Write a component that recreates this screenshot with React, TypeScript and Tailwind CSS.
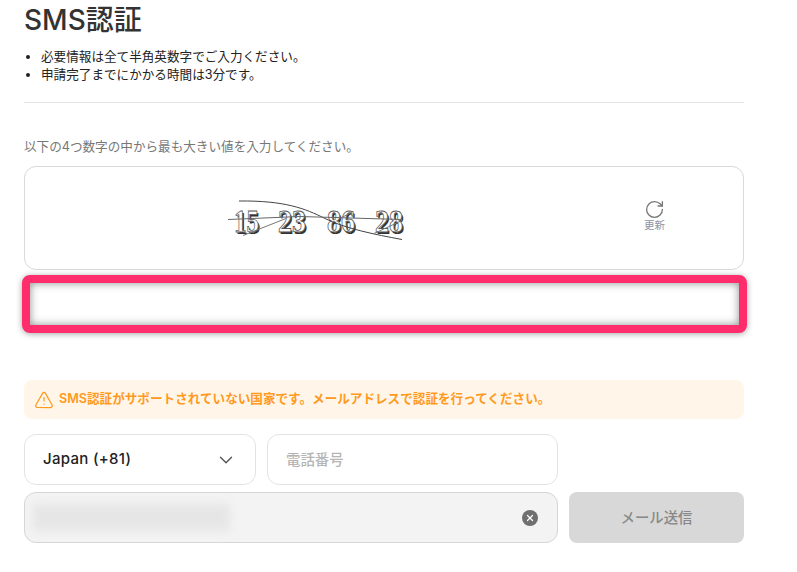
import { ChevronDown, RotateCw, TriangleAlert, X } from "lucide-react";

const FONT = "font-['Inter','Noto_Sans_CJK_JP',sans-serif]";

const CAPTCHA_NUMBERS = [
  { label: "15", x: 234, width: 25 },
  { label: "23", x: 278, width: 28 },
  { label: "86", x: 327, width: 28 },
  { label: "28", x: 375, width: 28 },
];

/** Captcha picture: outlined digits with noise lines through them */
function Captcha() {
  return (
    <svg width="190" height="60" viewBox="220 187.5 190 60" className="block">
      {CAPTCHA_NUMBERS.map((n) => (
        <g key={n.label} fontFamily="'Liberation Serif', serif" fontSize="31" fontWeight="700">
          <text x={n.x + 1.5} y={233} fill="#333" textLength={n.width} lengthAdjust="spacingAndGlyphs">
            {n.label}
          </text>
          <text x={n.x} y={231.5} fill="#fff" stroke="#555" strokeWidth="0.8" textLength={n.width} lengthAdjust="spacingAndGlyphs">
            {n.label}
          </text>
        </g>
      ))}
      <path d="M239 200.5C285 200 305 208 325 218S375 234 402 239" fill="none" stroke="#444" strokeWidth="1" />
      <path d="M228 219L300 216L402 219" fill="none" stroke="#666" strokeWidth="1" />
      <path d="M243 235L286 218" fill="none" stroke="#777" strokeWidth="1" />
      <path d="M374 233L402 220M340 218L353 211" fill="none" stroke="#777" strokeWidth="1" />
    </svg>
  );
}

export default function App() {
  return (
    <div className={`${FONT} h-[572px] w-[797px] overflow-hidden bg-white`}>
      <div className="ml-6 w-[720px]">
        <h1 className="text-[28px] leading-10 font-medium text-[#333]">SMS認証</h1>
        <ul className="mt-2 list-disc pl-[17px] text-[12.6px] leading-[18px] text-[#222]">
          <li>必要情報は全て半角英数字でご入力ください。</li>
          <li>申請完了までにかかる時間は3分です。</li>
        </ul>
        <hr className="mt-[18px] border-[#e4e4e4]" />
        <p className="mt-[35px] text-[12.6px] leading-[18px] text-[#777]">以下の4つ数字の中から最も大きい値を入力してください。</p>

        <div className="mt-2.5 flex h-[104px] items-center rounded-xl border border-[#d9d9d9] pr-[78px] pl-[195px]">
          <Captcha />
          <div className="mb-[5px] ml-auto flex flex-col items-center text-[#777]">
            <RotateCw size={21} strokeWidth={1.5} />
            <span className="text-[10.5px] leading-3 text-[#8b95a8]">更新</span>
          </div>
        </div>

        <input
          aria-label="captcha"
          className="mt-[5px] -ml-0.5 box-border block h-[58px] w-[725px] rounded-lg border-8 border-[#ff2d6b] bg-white shadow-[0_1px_6px_rgba(0,0,0,0.35),inset_0_0_8px_rgba(0,0,0,0.45)] outline-none"
        />

        <div className="mt-[47px] flex h-[39px] items-center gap-[5px] rounded-lg bg-[#fff6e9] pl-2.5 text-[12.6px] font-semibold text-[#ff9a1f]">
          <TriangleAlert size={20} strokeWidth={1.5} />
          <span>SMS認証がサポートされていない国家です。メールアドレスで認証を行ってください。</span>
        </div>

        <div className="mt-[15px] flex gap-[11px]">
          <div className="flex h-[51px] w-[232px] items-center justify-between rounded-xl border border-[#e3e3e3] pr-[18px] pl-[18px] text-[15px] font-medium tracking-[0.3px] text-[#222]">
            <span>Japan (+81)</span>
            <ChevronDown size={22} strokeWidth={1.5} className="text-[#555]" />
          </div>
          <input
            placeholder="電話番号"
            className="h-[51px] w-[291px] rounded-xl border border-[#e3e3e3] px-[18px] text-[14.4px] font-medium placeholder:text-[#b5b5b5]"
          />
        </div>

        <div className="mt-[7px] flex gap-[11px]">
          <div className="flex h-[51px] w-[534px] items-center justify-between rounded-xl border border-[#d6d6d6] bg-[#f3f3f3] pr-[19px] pl-2">
            <div className="h-[27px] w-[197px] bg-[#e6e6e6] blur-[4px]" />
            <span className="flex size-4 items-center justify-center rounded-full bg-[#6f6f6f] text-white">
              <X size={10} strokeWidth={3} />
            </span>
          </div>
          <button className="h-[51px] w-[175px] rounded-lg bg-[#d8d8d8] text-[14.4px] font-medium text-[#888]">メール送信</button>
        </div>
      </div>
    </div>
  );
}
